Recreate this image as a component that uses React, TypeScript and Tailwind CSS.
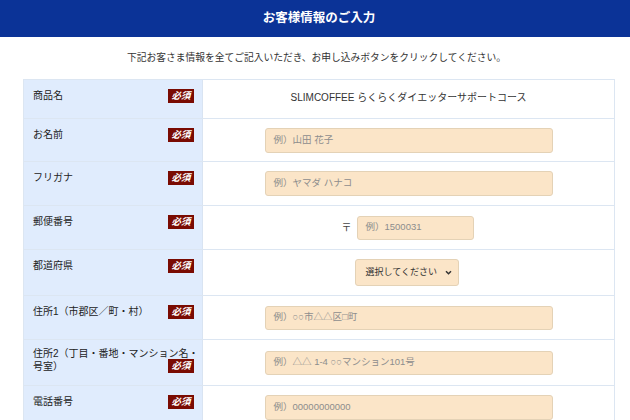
import React from "react";

const font = { fontFamily: '"Liberation Sans", "Noto Sans CJK JP", sans-serif' };

function Badge() {
  return (
    <div className="flex h-[14px] w-[26px] shrink-0 items-center justify-center bg-[#7a0b02] text-[9.5px] font-bold italic leading-none text-white">
      必須
    </div>
  );
}

function Label({ text }: { text: string }) {
  return (
    <div className="flex w-[179px] shrink-0 items-start justify-between border-r border-[#d9e4f2] bg-[#e0ecfd] pl-[9px] pr-[8px] pt-[9px]">
      <div className="text-[10px] leading-[14px] text-[#222]">{text}</div>
      <Badge />
    </div>
  );
}

function TextInput({ ph, w = "w-[288px]", h = "h-[25px]" }: { ph: string; w?: string; h?: string }) {
  return (
    <div
      className={`${w} ${h} flex items-center whitespace-nowrap rounded-[3px] border border-[#e4d2b6] bg-[#fbe5c8] pl-[8px] text-[9.5px] text-[#8d8d8d]`}
    >
      {ph}
    </div>
  );
}

export default function App() {
  return (
    <div className="min-h-[420px] w-[630px] overflow-hidden bg-white" style={font}>
      <div className="flex h-[37px] items-center justify-center bg-[#0b3397] pl-[8px] text-[12.5px] font-bold text-white">
        お客様情報のご入力
      </div>
      <div className="flex h-[42px] items-center justify-center pl-[3px] text-[9.75px] text-[#333]">
        下記お客さま情報を全てご記入いただき、お申し込みボタンをクリックしてください。
      </div>
      <div className="ml-[23px] w-[592px] border-x border-t border-[#dce6f2]">
        {/* row 1 */}
        <div className="flex h-[39px] border-b border-[#dce6f2]">
          <Label text="商品名" />
          <div className="flex flex-1 items-center justify-center pb-[4px] text-[10px] text-[#333]">
            SLIMCOFFEE らくらくダイエッターサポートコース
          </div>
        </div>
        {/* row 2 */}
        <div className="flex h-[43px] border-b border-[#dce6f2]">
          <Label text="お名前" />
          <div className="flex flex-1 items-center justify-center">
            <TextInput ph="例）山田 花子" />
          </div>
        </div>
        {/* row 3 */}
        <div className="flex h-[44px] border-b border-[#dce6f2]">
          <Label text="フリガナ" />
          <div className="flex flex-1 items-center justify-center">
            <TextInput ph="例）ヤマダ ハナコ" />
          </div>
        </div>
        {/* row 4 */}
        <div className="flex h-[44px] border-b border-[#dce6f2]">
          <Label text="郵便番号" />
          <div className="flex flex-1 items-center justify-center gap-[5px] pr-[2px]">
            <span className="text-[10px] text-[#444]">〒</span>
            <TextInput ph="例）1500031" w="w-[117px]" h="h-[24px]" />
          </div>
        </div>
        {/* row 5 */}
        <div className="flex h-[46px] border-b border-[#dce6f2]">
          <Label text="都道府県" />
          <div className="flex flex-1 items-center justify-center pr-[4px]">
            <div className="flex h-[27px] w-[104px] items-center justify-between whitespace-nowrap rounded-[3px] border border-[#e4d2b6] bg-[#fbe5c8] pl-[10px] pr-[6px] text-[9px] text-[#333]">
              <span>選択してください</span>
              <svg width="7" height="5" viewBox="0 0 8 6" fill="none">
                <path d="M1 1.5 L4 4.5 L7 1.5" stroke="#333" strokeWidth="1.8" />
              </svg>
            </div>
          </div>
        </div>
        {/* row 6 */}
        <div className="flex h-[44px] border-b border-[#dce6f2]">
          <Label text="住所1（市郡区／町・村）" />
          <div className="flex flex-1 items-center justify-center">
            <TextInput ph="例）○○市△△区□町" h="h-[24px]" />
          </div>
        </div>
        {/* row 7 */}
        <div className="flex h-[46px] border-b border-[#dce6f2]">
          <div className="w-[179px] shrink-0 border-r border-[#d9e4f2] bg-[#e0ecfd] pl-[9px] pr-[6px] pt-[7px] text-[10px] leading-[13px] text-[#222]">
            <div className="whitespace-nowrap">住所2（丁目・番地・マンション名・</div>
            <div className="flex items-start justify-between pr-[2px]">
              <span>号室）</span>
              <div className="mt-[-1px]">
                <Badge />
              </div>
            </div>
          </div>
          <div className="flex flex-1 items-center justify-center">
            <TextInput ph="例）△△ 1-4 ○○マンション101号" h="h-[24px]" />
          </div>
        </div>
        {/* row 8 */}
        <div className="flex h-[46px] border-b border-[#dce6f2]">
          <Label text="電話番号" />
          <div className="flex flex-1 items-start justify-center pt-[9px]">
            <TextInput ph="例）00000000000" />
          </div>
        </div>
      </div>
    </div>
  );
}
